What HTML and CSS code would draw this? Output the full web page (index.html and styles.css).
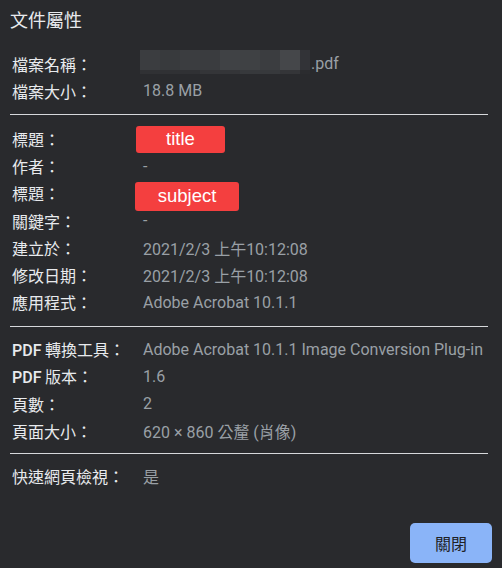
FILE: index.html
```html
<!DOCTYPE html>
<html lang="zh-Hant">
<head>
<meta charset="utf-8">
<title>文件屬性</title>
<link rel="stylesheet" href="styles.css">
</head>
<body>
<div class="dialog">
  <h1 class="title">文件屬性</h1>
  <div class="section first">
    <div class="row">
      <div class="label">檔案名稱：</div>
      <div class="value file">
        <div class="mosaic">
          <i class="m1"></i><i class="m2"></i><i class="m1"></i><i class="m3"></i><i class="m4"></i><i class="m5"></i><i class="m1"></i><i class="m6"></i><i class="m7"></i>
          <i class="s1"></i><i class="s1"></i><i class="s1"></i><i class="s2"></i><i class="s2"></i><i class="s3"></i><i class="s3"></i><i class="s2"></i><i class="s4"></i>
        </div>
        <span>.pdf</span>
      </div>
    </div>
    <div class="row">
      <div class="label">檔案大小：</div>
      <div class="value">18.8 MB</div>
    </div>
  </div>
  <div class="section">
    <div class="row">
      <div class="label">標題：</div>
      <div class="value"><span class="badge badge-title">title</span></div>
    </div>
    <div class="row">
      <div class="label">作者：</div>
      <div class="value">-</div>
    </div>
    <div class="row">
      <div class="label">標題：</div>
      <div class="value"><span class="badge badge-subject">subject</span></div>
    </div>
    <div class="row">
      <div class="label">關鍵字：</div>
      <div class="value">-</div>
    </div>
    <div class="row">
      <div class="label">建立於：</div>
      <div class="value">2021/2/3 上午10:12:08</div>
    </div>
    <div class="row">
      <div class="label">修改日期：</div>
      <div class="value">2021/2/3 上午10:12:08</div>
    </div>
    <div class="row">
      <div class="label">應用程式：</div>
      <div class="value">Adobe Acrobat 10.1.1</div>
    </div>
  </div>
  <div class="section third">
    <div class="row">
      <div class="label"><span class="latin">PDF</span> 轉換工具：</div>
      <div class="value">Adobe Acrobat 10.1.1 Image Conversion Plug-in</div>
    </div>
    <div class="row">
      <div class="label"><span class="latin">PDF</span> 版本：</div>
      <div class="value">1.6</div>
    </div>
    <div class="row">
      <div class="label">頁數：</div>
      <div class="value">2</div>
    </div>
    <div class="row">
      <div class="label">頁面大小：</div>
      <div class="value">620 × 860 公釐 (肖像)</div>
    </div>
  </div>
  <div class="section last">
    <div class="row">
      <div class="label">快速網頁檢視：</div>
      <div class="value">是</div>
    </div>
  </div>
  <div class="footer">
    <button class="close">關閉</button>
  </div>
</div>
</body>
</html>
```

FILE: styles.css
```css
html, body {
  margin: 0;
  padding: 0;
  background: #292a2d;
}

body {
  font-family: Roboto, "Noto Sans CJK TC", sans-serif;
  font-size: 16px;
  color: #e8eaed;
}

.dialog {
  height: 568px;
  box-sizing: border-box;
  display: flex;
  flex-direction: column;
  padding: 0 14px 5px 10px;
}

.title {
  margin: 0;
  padding-top: 7px;
  height: 33px;
  font-family: "Noto Sans CJK TC", sans-serif;
  font-size: 18px;
  font-weight: 400;
  line-height: 24px;
  color: #e8eaed;
}

.section {
  padding: 10px 0;
  border-bottom: 1px solid #d6d8db;
}

.section.third {
  padding: 9px 0;
}

.section.last {
  padding-top: 8px;
  border-bottom: none;
}

.row {
  display: grid;
  grid-template-columns: 131px 1fr;
  padding-left: 2px;
  height: 27.2px;
  align-items: center;
}

.label {
  font-family: "Noto Sans CJK TC", sans-serif;
  color: #e8eaed;
  white-space: nowrap;
}

.label .latin {
  font-family: Roboto, sans-serif;
  font-weight: 500;
}

.value {
  position: relative;
  color: #9aa0a6;
  white-space: nowrap;
  height: 100%;
  display: flex;
  align-items: center;
}

.value.file {
  align-items: flex-start;
}

.value.file span {
  align-self: center;
  margin-left: 1px;
}

.mosaic {
  margin-left: -3px;
  margin-top: -0.5px;
  display: grid;
  grid-template-columns: repeat(8, 20px) 10px;
  grid-template-rows: 20px 4px;
}

.mosaic i { display: block; }
.m1 { background: #3b3d40; }
.m2 { background: #383a3d; }
.m3 { background: #3a3c3f; }
.m4 { background: #404245; }
.m5 { background: #3f4144; }
.m6 { background: #45474a; }
.m7 { background: #323337; }
.s1 { background: #303134; }
.s2 { background: #343538; }
.s3 { background: #37393c; }
.s4 { background: #2b2c2f; }

.badge {
  position: absolute;
  background: #f43f3f;
  color: #ffffff;
  font-family: "Liberation Sans", Arial, sans-serif;
  font-size: 18.5px;
  border-radius: 3px;
  display: flex;
  align-items: center;
  justify-content: center;
}

.badge-title {
  left: -7px;
  top: 0.5px;
  width: 89px;
  height: 27px;
}

.badge-subject {
  left: -8px;
  top: 2px;
  width: 104px;
  height: 29px;
}

.footer {
  margin-top: auto;
  display: flex;
  justify-content: flex-end;
  margin-right: -4px;
}

.close {
  width: 82px;
  height: 40px;
  border: none;
  border-radius: 5px;
  background: #8ab4f8;
  color: #202124;
  font-family: "Noto Sans CJK TC", sans-serif;
  font-size: 16px;
  padding: 0;
}
```
